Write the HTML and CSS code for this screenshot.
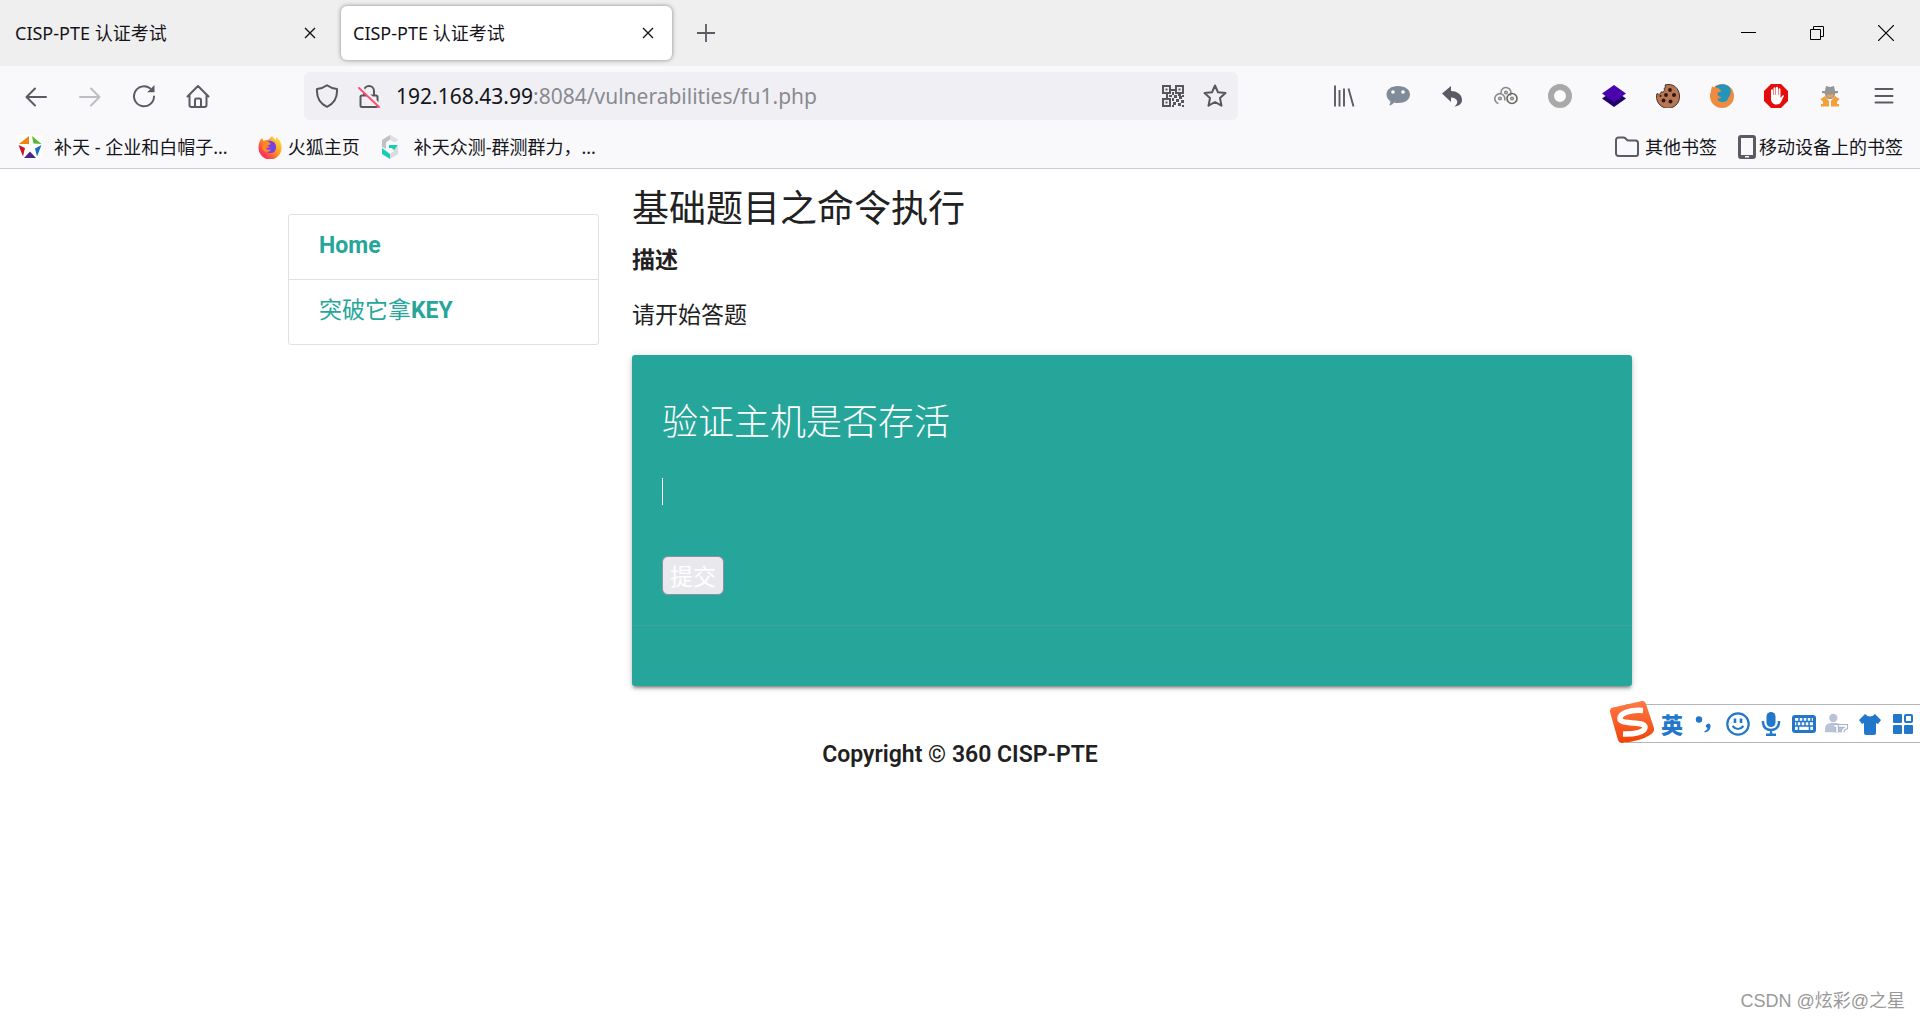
FILE: index.html
```html
<!DOCTYPE html>
<html lang="zh-CN">
<head>
<meta charset="utf-8">
<meta name="viewport" content="width=device-width, initial-scale=1">
<title>CISP-PTE 认证考试</title>
<link rel="stylesheet" href="styles.css">
</head>
<body>
<header class="browser">
  <div class="tabstrip">
    <div class="tab">
      <span class="tab-label">CISP-PTE 认证考试</span>
      <button class="tab-close" aria-label="关闭标签页"><svg width="12" height="12" viewBox="0 0 12 12"><path d="M1 1l10 10M11 1L1 11" stroke="#15141a" stroke-width="1.4"/></svg></button>
    </div>
    <div class="tab tab-active">
      <span class="tab-label">CISP-PTE 认证考试</span>
      <button class="tab-close" aria-label="关闭标签页"><svg width="12" height="12" viewBox="0 0 12 12"><path d="M1 1l10 10M11 1L1 11" stroke="#15141a" stroke-width="1.4"/></svg></button>
    </div>
    <button class="new-tab" aria-label="新建标签页"><svg width="18" height="18" viewBox="0 0 18 18"><path d="M9 0v18M0 9h18" stroke="#5b5b66" stroke-width="1.8"/></svg></button>
    <div class="window-controls">
      <button aria-label="最小化"><svg width="16" height="16" viewBox="0 0 16 16"><path d="M1 7.500h15" stroke="#000"/></svg></button>
      <button aria-label="还原"><svg width="16" height="16" viewBox="0 0 16 16" fill="none" stroke="#000"><path d="M1.500 4.500h10v10h-10zM4.500 4.500v-3h10v10h-3"/></svg></button>
      <button aria-label="关闭"><svg width="16" height="16" viewBox="0 0 16 16"><path d="M0 0l16 16M16 0L0 16" stroke="#000" stroke-width="1.2"/></svg></button>
    </div>
  </div>

  <div class="navbar">
    <div class="nav-buttons">
      <button aria-label="后退"><svg class="line" viewBox="0 0 24 24"><path d="M22 13H3M11 4.500L2.500 13l8.500 8.500"/></svg></button>
      <button class="dim" aria-label="前进"><svg class="line" viewBox="0 0 24 24"><path d="M2 13h19M13 4.500l8.500 8.500-8.500 8.500"/></svg></button>
      <button aria-label="刷新"><svg class="line" viewBox="0 0 24 24"><path d="M22 12.500A10 10 0 1 1 18 4.300"/><path d="M22.500 1v7.300h-7.300z" fill="currentColor" stroke="none"/></svg></button>
      <button aria-label="主页"><svg class="line" viewBox="0 0 24 24"><path d="M1.500 12.500L12 2l10.500 10.500M3.500 11v10a2 2 0 0 0 2 2h13a2 2 0 0 0 2-2V11M9 23v-7a1.500 1.500 0 0 1 1.500-1.500h3A1.500 1.500 0 0 1 15 16v7"/></svg></button>
    </div>
    <div class="urlbar">
      <svg class="line" viewBox="0 0 24 24"><path d="M12 1.200C9 3.500 5.500 4.500 2 5c-.5 8 2.500 14.500 10 17.800C19.500 19.500 22.500 13 22 5c-3.500-.5-7-1.500-10-3.800z"/></svg>
      <svg class="line lock" viewBox="0 0 24 24"><path d="M7 11V7a5 5 0 0 1 10 0v4M5 11.500h14a1.500 1.500 0 0 1 1.500 1.500v8.500A1.500 1.500 0 0 1 19 23H5a1.500 1.500 0 0 1-1.500-1.500V13A1.500 1.500 0 0 1 5 11.500z"/><path d="M3 2.500l19.500 18.500" stroke="#f0f0f4" stroke-width="3"/><path d="M2 4l20 19" stroke="#ff4f73" stroke-width="2"/></svg>
      <div class="address"><span class="host">192.168.43.99</span>:8084/vulnerabilities/fu1.php</div>
      <svg viewBox="0 0 24 24" fill="#56565c"><path fill-rule="evenodd" d="M1 1h9v9H1zM3 3v5h5V3zM14 1h9v9h-9zM16 3v5h5V3zM1 14h9v9H1zM3 16v5h5v-5z"/><path d="M4.500 4.500h2v2h-2zM17.500 4.500h2v2h-2zM4.500 17.500h2v2h-2zM10 5h4v2h-4zM5 10h2v4H5zM8 11h3v2H8zM17 10h3v2h-3zM11 8h2v3h-2zM13 11h3v3h-3zM18 12h3v3h-3zM11 14h2v3h-2zM15 15h3v3h-3zM20 16h3v3h-3zM12 18h3v3h-3zM17 19h3v3h-3zM21 21h2v2h-2zM11 21h2v2h-2zM21 11h2v2h-2z"/></svg>
      <button aria-label="添加书签"><svg class="line" viewBox="0 0 24 24"><path d="M12 1.500l3 6.800 7.500.8-5.500 5 1.500 7.600-6.500-3.700-6.500 3.700L7 14.100l-5.500-5 7.500-.8z"/></svg></button>
    </div>
    <div class="extensions">
      <button aria-label="书库"><svg viewBox="0 0 24 24" fill="none" stroke="#5b5b66" stroke-width="1.900"><path d="M3 1.500v21M7.500 6v16.500M12 4.500v18M16.500 4.500l5 18"/></svg></button>
      <button aria-label="聊天"><svg viewBox="0 0 24 24"><path d="M12 2c7 0 12 3.500 12 8.500S19 19 12 19c-1.500 0-3 0-4-.5-1 1.500-2.500 2.500-5 3 1.200-1.500 1.500-2.700 1.300-4.200C1.800 15.500.5 13 .5 10.500.5 5.500 5 2 12 2z" fill="#7f8b98"/><circle cx="7" cy="8" r="1.800" fill="#fff"/><circle cx="17" cy="8" r="1.800" fill="#fff"/></svg></button>
      <button aria-label="撤销"><svg viewBox="0 0 24 24"><path d="M2 9.500L11 2v5c7 .3 11 4 11 9 0 3.500-2.800 6.200-7.500 6.500 5-4 3-8.500-3.500-9v4.500z" fill="#5b5b66"/></svg></button>
      <button aria-label="代理"><svg viewBox="0 0 24 24" fill="none" stroke="#8b8b8b" stroke-width="1.600"><path d="M7 9a5 5 0 1 1 9 2.500"/><path d="M4.500 19.500a5 5 0 1 1 6-3"/><circle cx="18" cy="14.500" r="5" stroke="#66665f"/><circle cx="12" cy="8.500" r="1.300"/><circle cx="6" cy="14.500" r="1.300"/><circle cx="18" cy="14.500" r="1.300"/></svg></button>
      <button aria-label="圆环"><svg viewBox="0 0 24 24"><circle cx="12" cy="12" r="9" fill="#fff" stroke="#a9a9a9" stroke-width="6"/></svg></button>
      <button aria-label="图层"><svg viewBox="0 0 24 24"><path d="M0 14.500L5 11h14l5 3.500L12 23z" fill="#22006b"/><path d="M0 9.500L12 1l12 8.500-12 8.500z" fill="#4904ad"/></svg></button>
      <button aria-label="Cookie"><svg viewBox="0 0 24 24"><path d="M9 1c8-2.500 14.500 3.500 14.500 11A11.500 11.500 0 1 1 1 9.500c2 1.500 4 .5 4-1.500 3 .5 4-1.500 3-3.500 1.500-.5 1.800-2 1-3.500z" fill="#b87752" stroke="#40322d"/><g fill="#2b1814"><circle cx="14" cy="6" r="1.900"/><circle cx="10" cy="11" r="1.900"/><circle cx="18" cy="11" r="2"/><circle cx="7.500" cy="16.500" r="1.900"/><circle cx="14.500" cy="17.500" r="2"/><circle cx="4.500" cy="12" r="1"/></g></svg></button>
      <button aria-label="Firefox"><svg viewBox="0 0 24 24"><circle cx="12" cy="12" r="12" fill="#ee8b40"/><path d="M5 3C10-1 17-.5 20 4c2 4 0 8-2 10 0 3-3 4.500-6 4-3 0-4.500-2-4.500-4 1.500 1 3 .5 4-1-2-.2-4-1-4-3 0-1.500 2-2 4-3C10 5 8 4 5 3z" fill="#2594bb"/><path d="M1 7l1-5 3 3 4-1-1.500 3L5 10z" fill="#ee8b40"/></svg></button>
      <button aria-label="拦截"><svg viewBox="0 0 24 24"><path d="M7 0h10l7 7v10l-7 7H7l-7-7V7z" fill="#e40d0d"/><path d="M7 12V6.500q0-1.200 1-1.200t1 1.200V11h.5V4.500q0-1.200 1-1.200t1 1.200V11h.5V4q0-1.200 1-1.200T14 4v7h.5V5.500q0-1.200 1-1.200t1 1.200V14l2-2.500q1.200-.8 1.500.3L17.500 17c-1 2.500-2.500 3.500-5 3.500-3.500 0-5.500-2.500-5.500-6z" fill="#fff"/></svg></button>
      <button aria-label="侦探"><svg viewBox="0 0 24 24"><path d="M8 2l4 1 4-1 1 5h3v2l-3 .5c0 3.500-2 5.500-5 5.500s-5-2-5-5.500L4 9V7h3z" fill="#969696"/><path d="M8.500 10l3.500 1 3.500-1-1 3.500h-5z" fill="#f3a244"/><path d="M7 12l4 5v5.500H3V20H5v-2L2.500 15zM17 12l-4 5v5.500h8V20h-2v-2l2.500-3z" fill="#f3a03c"/></svg></button>
      <button aria-label="菜单"><svg class="line" viewBox="0 0 24 24"><path d="M3.500 5h17M3.500 12h17M3.500 18.500h17"/></svg></button>
    </div>
  </div>

  <nav class="bookmarks" aria-label="书签">
    <a class="wide" href="#"><svg viewBox="0 0 24 24"><path fill="#fff" d="M0 0h24v24H0z"/><path d="M11 1v8H1z" fill="#f28209"/><path d="M14 1l9.500 8-8-.5z" fill="#58b535"/><path d="M.5 10l6.500 3-2 8.500z" fill="#c9141e"/><path d="M23.500 10L17 13.500l2 8z" fill="#1470b7"/><path d="M12 16.500l6 6.500H6z" fill="#4a2590"/></svg><span>补天 - 企业和白帽子...</span></a>
    <a href="#"><svg viewBox="0 0 24 24"><defs><linearGradient id="fox" x1="1" y1="0" x2="0" y2="1"><stop offset="0" stop-color="#fff14a"/><stop offset=".45" stop-color="#ff9720"/><stop offset=".8" stop-color="#ff3355"/><stop offset="1" stop-color="#e52a80"/></linearGradient></defs><path d="M14 1c2 2 2 3 4 4 0-1 0-2 .5-3C22 5 24 9 23.500 13.500a11.500 11.500 0 0 1-23-1C.5 8 2 5 4 3l1.500 3C7 5 8 5 9 5c1.500 0 3-2 5-4z" fill="url(#fox)"/><path d="M9 6c5-1 9 1 9 6s-3 6.500-6.500 6C8 17.500 6 15 7 12c1 1 3 1.500 5 0-2-1-3.500-1-5-2z" fill="#7542e5"/><path d="M5 7l4-1.500L13 9l-4 2-1 2c1 2 3 2.500 5 1-1 4-7 4-9-1z" fill="#ff8a25"/></svg><span>火狐主页</span></a>
    <a class="wide" href="#"><svg viewBox="0 0 24 24"><path d="M12 0l8 5-3.500 2L12 4.500 8 7.500V14l-4-2V5z" fill="#bfc2c3"/><path d="M12 0l8 5-3.500 2L12 4.500z" fill="#dfdfdf"/><path d="M20 12v7l-8 5v-5l4-3-3-3z" fill="#d8dcdc"/><path d="M4 13l4 3 4 3v5l-8-5zM11 10h9l-4 5-2-2h-3z" fill="#19cdb5"/></svg><span>补天众测-群测群力，...</span></a>
    <a class="folder" href="#"><svg class="line" viewBox="0 0 24 24"><path d="M3.500 2.500h5c1.500 0 2 .5 3 2 .5.500 1 1 2 1h7A2.500 2.500 0 0 1 23 8v11a2 2 0 0 1-2 2H3.500A2.500 2.500 0 0 1 1 18.500V5a2.500 2.500 0 0 1 2.500-2.500z"/></svg><span>其他书签</span></a>
    <a class="mobile" href="#"><svg viewBox="0 0 18 24"><path fill-rule="evenodd" d="M3 0h12a3 3 0 0 1 3 3v18a3 3 0 0 1-3 3H3a3 3 0 0 1-3-3V3a3 3 0 0 1 3-3zM3 3v17h12V3zM7 21v1.500h4V21z" fill="#5b5b66"/></svg><span>移动设备上的书签</span></a>
  </nav>
</header>

<main class="container">
  <nav class="sidebar">
    <a href="#">Home</a>
    <a href="#"><span class="cjk">突破它拿</span>KEY</a>
  </nav>
  <section>
    <h1>基础题目之命令执行</h1>
    <h2>描述</h2>
    <p class="intro">请开始答题</p>
    <form class="card">
      <div class="card-content">
        <label class="card-title" for="host">验证主机是否存活</label>
        <input class="host-input" id="host" type="text" autocomplete="off">
        <button class="submit" type="button">提交</button>
      </div>
      <div class="card-action"></div>
    </form>
  </section>
</main>
<footer class="copyright">Copyright © 360 CISP-PTE</footer>

<div class="ime">
  <svg class="ime-logo" viewBox="0 0 44 42"><defs><linearGradient id="sg" x1="0" y1="0" x2="0" y2="1"><stop offset="0" stop-color="#ff7a48"/><stop offset="1" stop-color="#ef4307"/></linearGradient></defs><path d="M3 6.500L32 0q3-.5 4 3l8 24q1 4-4 7-9 6-28 8-3 0-4-3L0 11q-.5-4 3-4.500z" fill="url(#sg)"/><path d="M33 9.500C20 8.500 10 12 10 17.500c0 7 24 2 25 8.500.5 5-11 7.500-22 7" fill="none" stroke="#fff" stroke-width="5.500"/></svg>
  <button class="ime-lang">英</button>
  <button aria-label="标点"><svg viewBox="0 0 24 24" fill="#2277cb"><circle cx="6" cy="7.500" r="3.200"/><path d="M13 13q3-3 4.500 0c.5 4-2 7-6 7.500v-1.300c2-.7 3-1.800 3-3.200-1.500-.5-2-1.700-1.500-3z"/></svg></button>
  <button aria-label="表情"><svg viewBox="0 0 24 24" fill="none" stroke="#2277cb" stroke-width="2.200"><circle cx="12" cy="12" r="10.700"/><path d="M9 6.500V11M15 6.500V11" stroke-width="2.600"/><path d="M6.500 14q5.500 6 11 0" /></svg></button>
  <button aria-label="语音"><svg viewBox="0 0 24 24" fill="none" stroke="#2277cb" stroke-width="2.400"><rect x="7.500" y="0" width="9" height="15" rx="4.500" fill="#2277cb" stroke="none"/><path d="M4 9v2q1 7 8 7t8-7V9M12 18v5M7 22.800h10"/></svg></button>
  <button aria-label="键盘"><svg viewBox="0 0 24 24"><rect x="0" y="3" width="24" height="18" rx="3" fill="#2277cb"/><path d="M3 6h18v12H3z" fill="#fff"/><path d="M3 9.500h18M3 14h18M7 6v3.500M11 6v3.500M15 6v3.500M19 6v3.500M5 9.500V14M9 9.500V14M13 9.500V14M17 9.500V14M6.500 14v4M17.500 14v4" stroke="#2277cb" stroke-width="1.500"/></svg></button>
  <button aria-label="用户"><svg viewBox="0 0 26 24"><circle cx="9" cy="5.500" r="4.500" fill="#b8c3d8"/><path d="M0 21v-3q0-7 7-7h5q4 0 6 3v7z" fill="#b8c3d8"/><path d="M10 14h3v7M15 14h8v2q-4 1-4 5" fill="none" stroke="#a7b2c9" stroke-width="4"/><path d="M10 14h3v7M15 14h8v2q-4 1-4 5" fill="none" stroke="#fff" stroke-width="1.800"/></svg></button>
  <button aria-label="皮肤"><svg viewBox="0 0 24 24"><path d="M7 2q5 5 10 0l6 6-3 4-2-1v10q0 2-2 2H8q-2 0-2-2V11l-2 1-3-4z" fill="#2277cb"/></svg></button>
  <button aria-label="工具箱"><svg viewBox="0 0 24 24" fill="#2277cb"><rect x="2" y="2" width="9" height="9" rx="1"/><rect x="2" y="13" width="9" height="9" rx="1"/><rect x="13" y="13" width="9" height="9" rx="1"/><rect x="14" y="3" width="7" height="7" rx="1" fill="none" stroke="#2277cb" stroke-width="2"/></svg></button>
</div>
<div class="watermark">CSDN @炫彩@之星</div>
</body>
</html>
```

FILE: styles.css
```css
* { box-sizing: border-box; }

body {
  margin: 0;
  min-height: 100vh;
  position: relative;
  background: #fff;
  color: #212121;
  font: 23px/34px "Noto Sans", "Noto Sans CJK SC", sans-serif;
}

button {
  padding: 0;
  border: 0;
  background: none;
  color: inherit;
  font: inherit;
}

a { color: inherit; text-decoration: none; }

svg { display: block; flex: none; }

/* browser frame */
.browser {
  border-bottom: 1px solid #ccc;
  background: #f9f9fb;
  color: #15141a;
  font-size: 18px;
  line-height: 24px;
}

.tabstrip {
  display: flex;
  align-items: center;
  gap: 7px;
  height: 66px;
  padding-left: 3px;
  background: #efefef;
}

.tab {
  display: flex;
  align-items: center;
  justify-content: space-between;
  width: 331px;
  height: 54px;
  padding: 0 12px;
  border-radius: 6px;
}

.tab-active {
  background: #fff;
  box-shadow: 0 0 4px rgba(60, 60, 80, .6);
}

.tab-close,
.new-tab {
  display: grid;
  place-items: center;
  width: 24px;
  height: 24px;
}

.new-tab { width: 54px; }

.window-controls { display: flex; margin-left: auto; }

.window-controls button {
  display: grid;
  place-items: center;
  width: 69px;
  height: 66px;
}

.navbar {
  display: flex;
  align-items: center;
  height: 60px;
  padding: 0 9px;
}

.navbar svg { width: 24px; height: 24px; }

.line {
  fill: none;
  stroke: currentColor;
  stroke-width: 2;
  stroke-linecap: round;
  stroke-linejoin: round;
}

.nav-buttons,
.extensions { display: flex; color: #5b5b66; }

.nav-buttons button,
.extensions button {
  display: grid;
  place-items: center;
  width: 54px;
  height: 48px;
}

.nav-buttons .dim { color: #bdbdc3; }

.urlbar {
  display: flex;
  align-items: center;
  flex: 0 1 934px;
  height: 48px;
  margin-left: 79px;
  padding: 0 11px;
  border-radius: 6px;
  background: #f0f0f4;
  color: #56565c;
}

.urlbar .lock { margin-left: 18px; }

.address {
  flex: 1;
  margin-left: 15px;
  color: #8a8a90;
  font-size: 21px;
}

.address .host { color: #15141a; }

.urlbar button { margin-left: 18px; }

.extensions { margin-left: auto; }

.bookmarks {
  display: flex;
  align-items: center;
  height: 42px;
  padding: 0 17px 0 18px;
}

.bookmarks a {
  display: flex;
  align-items: center;
  gap: 6px;
  margin-right: 18px;
  white-space: nowrap;
}

.bookmarks .wide { gap: 12px; margin-right: 30px; }

.bookmarks svg { width: 24px; height: 24px; }

.bookmarks .folder { margin: 0 21px 0 auto; }

.bookmarks .folder svg { color: #5b5b66; }

.bookmarks .mobile { gap: 3px; margin-right: 0; }

.bookmarks .mobile svg { width: 18px; }

/* page */
.container {
  display: grid;
  grid-template-columns: 311fr 1000fr;
  align-items: start;
  gap: 33px;
  width: 70%;
  margin: 0 auto;
  padding-top: 19px;
}

.sidebar {
  margin-top: 26px;
  border: 1px solid #e0e0e0;
  border-radius: 3px;
  color: #26a69a;
  font-family: Roboto, "Noto Sans CJK SC", sans-serif;
  font-weight: 700;
}

.sidebar a {
  display: block;
  padding: 14px 30px 16px;
}

.sidebar a + a { border-top: 1px solid #e0e0e0; }

.sidebar .cjk { font-weight: 400; }

h1 {
  margin: 0;
  font-size: 37px;
  font-weight: 400;
  line-height: 40px;
}

h2 {
  margin: 14px 0 21px;
  font-size: 23px;
  font-weight: 700;
}

.intro { margin: 0 0 24px; }

.card {
  border-radius: 3px;
  background: #26a69a;
  box-shadow: 0 3px 3px rgba(0, 0, 0, .2), 0 1px 8px rgba(0, 0, 0, .14), 0 4px 2px -3px rgba(0, 0, 0, .3);
  color: #fff;
}

.card-content { padding: 40px 30px 30px; }

.card-title {
  display: block;
  font-size: 36px;
  font-weight: 300;
  line-height: 54px;
}

.host-input {
  display: block;
  width: 100%;
  height: 67px;
  margin: 9px 0 31px;
  padding: 0;
  border: 0;
  outline: 0;
  /* text cursor in the empty field */
  background: linear-gradient(#fff, #fff) left center / 1px 27px no-repeat;
  color: #fff;
  font: inherit;
  caret-color: transparent;
}

.submit {
  display: block;
  height: 39px;
  padding: 0 7px;
  border: 1px solid #8f8f9d;
  border-radius: 6px;
  background: #e9e9ed;
  line-height: 36px;
}

.card-action {
  height: 61px;
  border-top: 1px solid rgba(160, 160, 160, .2);
}

.copyright {
  margin-top: 52px;
  font-family: Roboto, "Noto Sans CJK SC", sans-serif;
  font-weight: 600;
  text-align: center;
}

/* floating input-method bar */
.ime {
  position: absolute;
  top: 704px;
  right: 0;
  display: flex;
  align-items: center;
  gap: 9px;
  height: 39px;
  padding-right: 5px;
  border: solid #b5b5bd;
  border-width: 1px 0;
  background: #fff;
}

.ime svg { width: 24px; height: 24px; }

.ime .ime-logo { width: 44px; height: 42px; margin: 0 -3px 3px -16px; }

.ime-lang {
  width: 24px;
  color: #2277cb;
  font-size: 22px;
  font-weight: 900;
  line-height: 36px;
}

.watermark {
  position: absolute;
  right: 15px;
  bottom: 5px;
  color: #999;
  font: 18px/28px "Liberation Sans", "Noto Sans CJK SC", sans-serif;
}
```
